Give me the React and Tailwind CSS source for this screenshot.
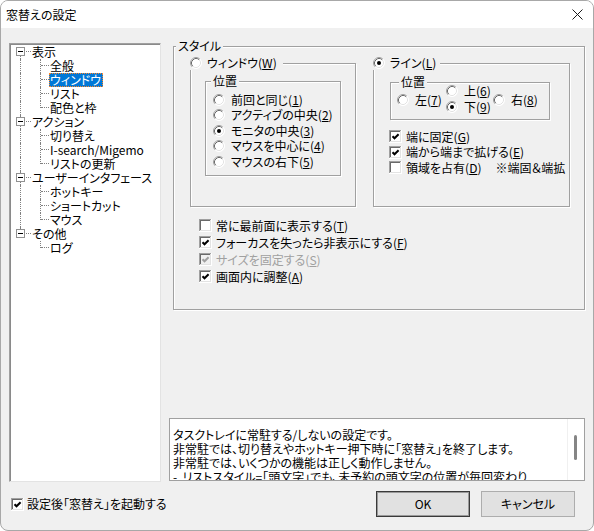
import React from "react";

function Radio({ checked }) {
  return (
    <svg width="12" height="12" viewBox="0 0 12 12" className="block shrink-0">
      <circle cx="6" cy="6" r="5.5" fill="#ffffff" />
      <path d="M9.89 2.11 A5.5 5.5 0 0 0 2.11 9.89" stroke="#a0a0a0" fill="none" />
      <path d="M2.11 9.89 A5.5 5.5 0 0 0 9.89 2.11" stroke="#ffffff" fill="none" />
      <path d="M9.18 2.82 A4.5 4.5 0 0 0 2.82 9.18" stroke="#696969" fill="none" />
      <path d="M2.82 9.18 A4.5 4.5 0 0 0 9.18 2.82" stroke="#e3e3e3" fill="none" />
      {checked && <circle cx="6" cy="6" r="2" fill="#000000" />}
    </svg>
  );
}

function Check({ checked, disabled }) {
  return (
    <svg width="13" height="13" viewBox="0 0 13 13" className="block shrink-0">
      <g shapeRendering="crispEdges">
        <rect x="0" y="0" width="13" height="13" fill="#ffffff" />
        <rect x="0" y="0" width="12" height="12" fill="#a0a0a0" />
        <rect x="1" y="1" width="11" height="11" fill="#e3e3e3" />
        <rect x="1" y="1" width="10" height="10" fill="#696969" />
        <rect x="2" y="2" width="9" height="9" fill={disabled ? "#f0f0f0" : "#ffffff"} />
      </g>
      {checked && (
        <path
          d="M3.5 6.3 L5.5 8.3 L9.6 4.2"
          stroke={disabled ? "#a0a0a0" : "#000000"}
          strokeWidth="2"
          fill="none"
        />
      )}
    </svg>
  );
}

function Label({ text, m }) {
  if (!m) return <span>{text}</span>;
  const i = text.lastIndexOf("(" + m + ")");
  return (
    <span>
      {text.slice(0, i + 1)}
      <u className="underline-offset-[1px]">{m}</u>
      {text.slice(i + 2)}
    </span>
  );
}

function RadioItem({ text, m, checked, className = "" }) {
  return (
    <div className={"flex items-center gap-[6px] " + className}>
      <Radio checked={checked} />
      <Label text={text} m={m} />
    </div>
  );
}

function CheckItem({ text, m, checked, disabled, className = "", extra }) {
  return (
    <div className={"flex items-center gap-[4px] " + (disabled ? "text-[#a0a0a0] " : "") + className}>
      <Check checked={checked} disabled={disabled} />
      <Label text={text} m={m} />
      {extra}
    </div>
  );
}

const groupCls =
  "relative border border-[#a0a0a0] shadow-[inset_1px_1px_0_#ffffff,1px_1px_0_#ffffff]";

const tree = [
  { label: "表示", children: ["全般", "ウィンドウ", "リスト", "配色と枠"] },
  { label: "アクション", children: ["切り替え", "I-search/Migemo", "リストの更新"] },
  { label: "ユーザーインタフェース", children: ["ホットキー", "ショートカット", "マウス"] },
  { label: "その他", children: ["ログ"] },
];

const dotV = "absolute left-[10px] border-l border-dotted border-[#808080]";

function Tree() {
  return (
    <div className="flex flex-col pt-[1px]">
      {tree.map((node, ri) => {
        const first = ri === 0;
        const last = ri === tree.length - 1;
        return (
          <React.Fragment key={node.label}>
            <div className="flex h-[14px] items-center">
              <div className="relative h-full w-[21px] shrink-0">
                {!first && <div className={dotV + " top-0 h-[2px]"} />}
                {!last && <div className={dotV + " top-[11px] bottom-0"} />}
                <div className="absolute left-[6px] top-[2px] flex h-[9px] w-[9px] items-center justify-center border border-[#919191] bg-white">
                  <div className="h-px w-[5px] bg-black" />
                </div>
                <div className="absolute left-[16px] top-[6px] w-[5px] border-t border-dotted border-[#808080]" />
              </div>
              <span className="border border-transparent px-0 leading-[12px]">{node.label}</span>
            </div>
            {node.children.map((c, ci) => {
              const lastChild = ci === node.children.length - 1;
              const selected = c === "ウィンドウ";
              return (
                <div key={c} className="flex h-[14px] items-center">
                  <div className="relative h-full w-[21px] shrink-0">
                    {!last && <div className={dotV + " top-0 bottom-0"} />}
                  </div>
                  <div className="relative h-full w-[18px] shrink-0">
                    <div
                      className={
                        "absolute left-[9px] top-0 border-l border-dotted border-[#808080] " +
                        (lastChild ? "h-[7px]" : "bottom-0")
                      }
                    />
                    <div className="absolute left-[10px] top-[6px] w-[8px] border-t border-dotted border-[#808080]" />
                  </div>
                  <span
                    className={
                      "border px-0 leading-[12px] " +
                      (selected
                        ? "border-dotted border-[#ff8728] bg-[#0078d7] pr-[1px] text-white"
                        : "border-transparent")
                    }
                  >
                    {c}
                  </span>
                </div>
              );
            })}
          </React.Fragment>
        );
      })}
    </div>
  );
}

export default function App() {
  return (
    <div className="h-[531px] w-[594px] bg-white font-['Noto_Sans_CJK_JP','Noto_Sans',sans-serif] text-[12px] leading-[14px] text-black [font-feature-settings:'palt']">
      <div className="flex h-full w-full flex-col overflow-hidden rounded-[8px] border border-[#a8a8a8] bg-[#f0f0f0]">
        {/* title bar */}
        <div className="flex h-[27px] shrink-0 items-center justify-between bg-white pl-[5px] pr-[10px]">
          <span className="text-[12px]">窓替えの設定</span>
          <svg width="11" height="11" viewBox="0 0 11 11">
            <path d="M0.5 0.5 L10.5 10.5 M10.5 0.5 L0.5 10.5" stroke="#1a1a1a" strokeWidth="1" />
          </svg>
        </div>

        {/* body */}
        <div className="flex flex-1 flex-col px-[8px]">
          <div className="mt-[15px] flex h-[439px] gap-[8px]">
            {/* tree */}
            <div className="h-full w-[152px] shrink-0 overflow-hidden border border-t-[#a0a0a0] border-l-[#a0a0a0] border-r-[#e3e3e3] border-b-[#e3e3e3] bg-white shadow-[inset_1px_1px_0_#8a8a8a]">
              <Tree />
            </div>

            {/* right column */}
            <div className="flex w-[416px] flex-col">
              <div className={groupCls + " ml-[4px] mt-[3px] h-[264px] w-[412px]"}>
                <div className="absolute left-[2px] top-[-8px] h-[14px] bg-[#f0f0f0] px-[2px]">スタイル</div>

                <div className="ml-[16px] mt-[16px] flex">
                  {/* window group */}
                  <div className={groupCls + " h-[144px] w-[166px]"}>
                    <div className="absolute left-[-3px] top-[-8px] flex h-[14px] items-center gap-[5px] bg-[#f0f0f0] pl-[2px] pr-[6px]">
                      <Radio />
                      <Label text="ウィンドウ(W)" m="W" />
                    </div>
                    <div className={groupCls + " ml-[14px] mt-[17px] h-[95px] w-[136px]"}>
                      <div className="absolute left-[5px] top-[-8px] h-[14px] bg-[#f0f0f0] px-[2px]">位置</div>
                      <div className="flex flex-col pl-[7px] pt-[10px]">
                        <RadioItem className="h-[15.5px]" text="前回と同じ(1)" m="1" />
                        <RadioItem className="h-[15.5px]" text="アクティブの中央(2)" m="2" />
                        <RadioItem className="h-[15.5px]" text="モニタの中央(3)" m="3" checked />
                        <RadioItem className="h-[15.5px]" text="マウスを中心に(4)" m="4" />
                        <RadioItem className="h-[15.5px]" text="マウスの右下(5)" m="5" />
                      </div>
                    </div>
                  </div>

                  {/* line group */}
                  <div className={groupCls + " ml-[17px] h-[144px] w-[197px]"}>
                    <div className="absolute left-[-3px] top-[-8px] flex h-[14px] items-center gap-[5px] bg-[#f0f0f0] pl-[2px] pr-[4px]">
                      <Radio checked />
                      <Label text="ライン(L)" m="L" />
                    </div>
                    <div className={groupCls + " ml-[16px] mt-[18px] h-[38px] w-[160px]"}>
                      <div className="absolute left-[8px] top-[-8px] h-[14px] bg-[#f0f0f0] px-[2px]">位置</div>
                      <div className="flex items-start pl-[6px]">
                        <RadioItem className="mt-[9px] h-[16px] w-[49px]" text="左(7)" m="7" />
                        <div className="flex w-[47px] flex-col">
                          <RadioItem className="h-[16px] gap-[5px]" text="上(6)" m="6" />
                          <RadioItem className="h-[16px] gap-[5px]" text="下(9)" m="9" checked />
                        </div>
                        <RadioItem className="mt-[9px] h-[16px] gap-[5px]" text="右(8)" m="8" />
                      </div>
                    </div>
                    <div className="ml-[15px] mt-[9px] flex flex-col">
                      <CheckItem className="h-[15.5px]" text="端に固定(G)" m="G" checked />
                      <CheckItem className="h-[15.5px]" text="端から端まで拡げる(E)" m="E" checked />
                      <CheckItem
                        className="h-[15.5px]"
                        text="領域を占有(D)"
                        m="D"
                        extra={<span className="ml-[10px]">※端固＆端拡</span>}
                      />
                    </div>
                  </div>
                </div>

                <div className="ml-[25px] mt-[10px] flex flex-col">
                  <CheckItem className="h-[17px]" text="常に最前面に表示する(T)" m="T" />
                  <CheckItem className="h-[17px]" text="フォーカスを失ったら非表示にする(F)" m="F" checked />
                  <CheckItem className="h-[17px]" text="サイズを固定する(S)" m="S" checked disabled />
                  <CheckItem className="h-[17px]" text="画面内に調整(A)" m="A" checked />
                </div>
              </div>

              {/* description */}
              <div className="mt-[108px] flex h-[63px] w-[416px] border border-[#a0a0a0] bg-white">
                <div className="flex-1 overflow-hidden whitespace-nowrap pl-[3px] pt-[9px] leading-[14px]">
                  <div>タスクトレイに常駐する/しないの設定です。</div>
                  <div>非常駐では、切り替えやホットキー押下時に「窓替え」を終了します。</div>
                  <div>非常駐では、いくつかの機能は正しく動作しません。</div>
                  <div>-&nbsp;&nbsp;リストスタイル=「頭文字」でも、未予約の頭文字の位置が毎回変わり</div>
                </div>
                <div className="relative w-[17px] shrink-0 border-l border-[#f0f0f0]">
                  <div className="absolute left-[6px] top-[16px] h-[25px] w-[3px] rounded-full bg-[#858585]" />
                </div>
              </div>
            </div>
          </div>

          {/* bottom row */}
          <div className="mt-[9px] flex h-[26px] items-center">
            <div className="ml-[2px] flex items-center gap-[3px]">
              <Check checked />
              <span>設定後「窓替え」を起動する</span>
            </div>
            <div className="ml-auto mr-[10px] flex gap-[11px]">
              <button className="h-[26px] w-[94px] border border-[#3a3a3a] bg-[#e1e1e1] shadow-[inset_0_0_0_1px_#9a9a9a]">
                OK
              </button>
              <button className="h-[26px] w-[94px] border border-[#adadad] bg-[#e1e1e1]">キャンセル</button>
            </div>
          </div>
        </div>
      </div>
    </div>
  );
}
